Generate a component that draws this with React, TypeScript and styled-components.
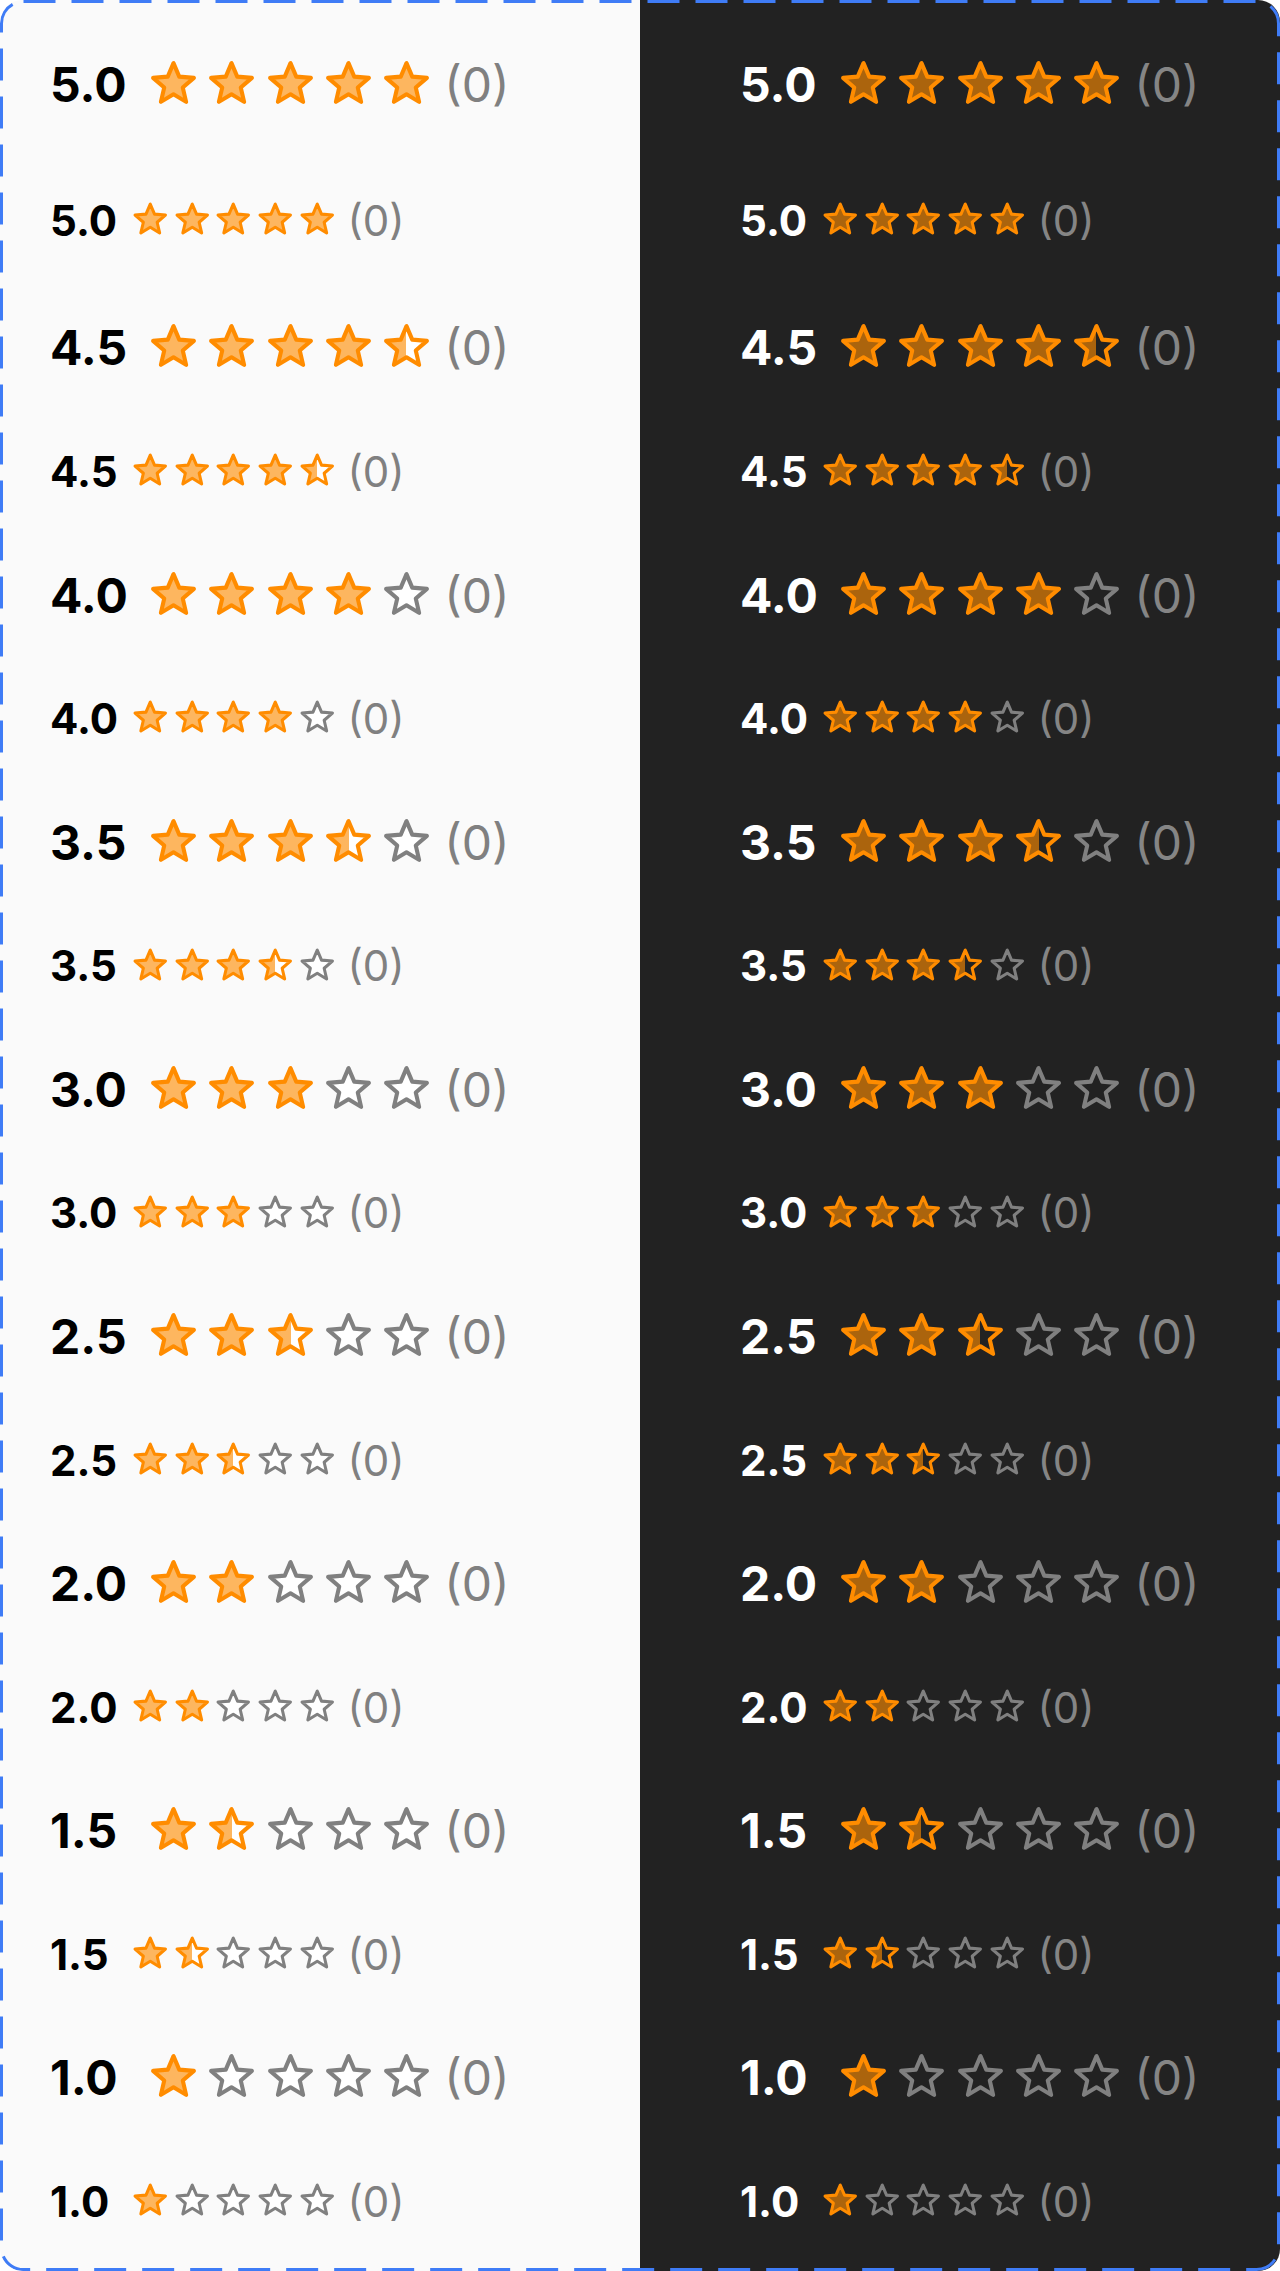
import React from 'react';
import styled, { createGlobalStyle } from 'styled-components';

const GlobalStyle = createGlobalStyle`
  html, body { margin: 0; padding: 0; background: #ffffff; }
  body { font-family: Inter, "Noto Sans", "Liberation Sans", sans-serif; }
  * { box-sizing: border-box; }
`;

type Size = 'lg' | 'sm';
type Mode = 'light' | 'dark';

const SIZES = {
  lg: { star: 49, gap: 9.3, label: 99, font: 48, countGap: 13 },
  sm: { star: 36.5, gap: 5.17, label: 82, font: 42, countGap: 12.3 },
};

const COLORS = {
  light: { bg: '#fafafa', text: '#000000', count: '#808080', emptyFill: '#ffffff', emptyOpacity: 1, padLeft: 50 },
  dark: { bg: '#222222', text: '#ffffff', count: '#858585', emptyFill: '#222222', emptyOpacity: 0, padLeft: 100 },
};

const ORANGE = '#ff8c00';
const FILL_OPACITY = 0.62;
const GREY = '#808080';

const Frame = styled.div`
  position: relative;
  display: grid;
  grid-template-columns: 640px 640px;
  width: 1280px;
  min-height: 100vh;
  border-radius: 22px;
  overflow: hidden;
`;

const BorderOverlay = styled.svg`
  position: absolute;
  left: 0;
  top: 0;
  width: 1280px;
  height: 2271px;
  pointer-events: none;
`;

const Panel = styled.section<{ $mode: Mode }>`
  display: flex;
  flex-direction: column;
  background: ${(p) => COLORS[p.$mode].bg};
  padding: 23.2px 0 0 ${(p) => COLORS[p.$mode].padLeft}px;
`;

const Row = styled.div<{ $lead: number }>`
  display: flex;
  align-items: center;
  height: 123.57px;
  flex: none;
  margin-top: ${(p) => p.$lead}px;
`;

const Label = styled.span<{ $size: Size; $mode: Mode }>`
  flex: none;
  width: ${(p) => SIZES[p.$size].label}px;
  font-size: ${(p) => SIZES[p.$size].font}px;
  font-weight: 700;
  line-height: 1;
  color: ${(p) => COLORS[p.$mode].text};
`;

const Stars = styled.div<{ $size: Size }>`
  display: flex;
  align-items: center;
  gap: ${(p) => SIZES[p.$size].gap}px;
  margin-bottom: 3px;
`;

const StarSvg = styled.svg<{ $size: Size }>`
  display: block;
  flex: none;
  width: ${(p) => SIZES[p.$size].star}px;
  height: ${(p) => SIZES[p.$size].star}px;
`;

const Count = styled.span<{ $size: Size; $mode: Mode }>`
  margin-left: ${(p) => SIZES[p.$size].countGap}px;
  font-size: ${(p) => SIZES[p.$size].font}px;
  font-weight: 400;
  line-height: 1;
  color: ${(p) => COLORS[p.$mode].count};
`;

const STAR_PATH =
  'M12 17.27L18.18 21l-1.64-7.03L22 9.24l-7.19-.61L12 2 9.19 8.63 2 9.24l5.46 4.73L5.82 21z';

type Kind = 'full' | 'half' | 'empty';

function Star({ kind, size, mode }: { kind: Kind; size: Size; mode: Mode }) {
  const c = COLORS[mode];
  const gradId = `half-${mode}-${size}`;
  let fill = ORANGE;
  let fillOpacity = FILL_OPACITY;
  let stroke = ORANGE;
  if (kind === 'empty') {
    fill = c.emptyFill;
    fillOpacity = c.emptyOpacity;
    stroke = GREY;
  } else if (kind === 'half') {
    fill = `url(#${gradId})`;
    fillOpacity = 1;
  }
  return (
    <StarSvg $size={size} viewBox="0 0 24 24" aria-hidden="true">
      {kind === 'half' && (
        <defs>
          <linearGradient id={gradId} x1="0" y1="0" x2="1" y2="0">
            <stop offset="50%" stopColor={ORANGE} stopOpacity={FILL_OPACITY} />
            <stop offset="50%" stopColor={c.emptyFill} stopOpacity={c.emptyOpacity} />
          </linearGradient>
        </defs>
      )}
      <path
        d={STAR_PATH}
        fill={fill}
        fillOpacity={fillOpacity}
        stroke={stroke}
        strokeWidth={2}
        strokeLinejoin="round"
      />
    </StarSvg>
  );
}

function Rating({ value, size, mode }: { value: number; size: Size; mode: Mode }) {
  const kinds: Kind[] = [1, 2, 3, 4, 5].map((i) =>
    value >= i ? 'full' : value >= i - 0.5 ? 'half' : 'empty'
  );
  return (
    <>
      <Label $size={size} $mode={mode}>{value.toFixed(1)}</Label>
      <Stars $size={size}>
        {kinds.map((k, i) => (
          <Star key={i} kind={k} size={size} mode={mode} />
        ))}
      </Stars>
      <Count $size={size} $mode={mode}>(0)</Count>
    </>
  );
}

const VALUES = [5, 4.5, 4, 3.5, 3, 2.5, 2, 1.5, 1];
const ROWS: { value: number; size: Size }[] = VALUES.flatMap((v) => [
  { value: v, size: 'lg' as Size },
  { value: v, size: 'sm' as Size },
]);
const LEADS = [0, 12.43, 3.93];

function RatingPanel({ mode }: { mode: Mode }) {
  return (
    <Panel $mode={mode}>
      {ROWS.map((r, i) => (
        <Row key={i} $lead={LEADS[i] ?? 0}>
          <Rating value={r.value} size={r.size} mode={mode} />
        </Row>
      ))}
    </Panel>
  );
}

export default function App() {
  return (
    <>
      <GlobalStyle />
      <Frame>
        <RatingPanel mode="light" />
        <RatingPanel mode="dark" />
        <BorderOverlay viewBox="0 0 1280 2271" aria-hidden="true">
          <rect
            x="1.5"
            y="1.5"
            width="1277"
            height="2268"
            rx="22"
            ry="22"
            fill="none"
            stroke="#3f7cf6"
            strokeWidth="3"
            strokeDasharray="32 16"
          />
        </BorderOverlay>
      </Frame>
    </>
  );
}
